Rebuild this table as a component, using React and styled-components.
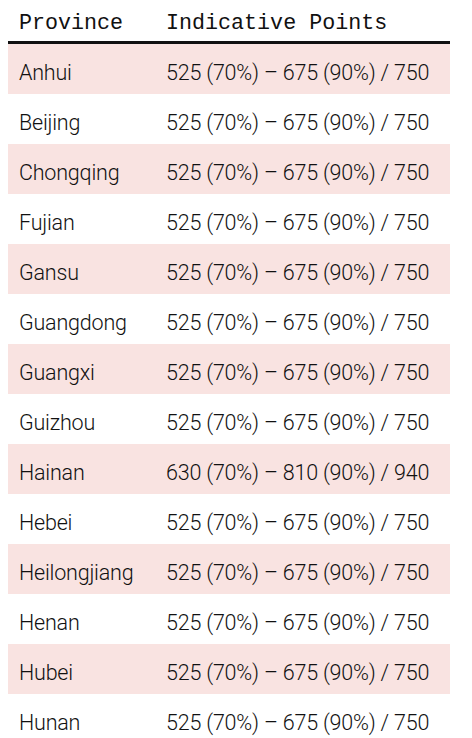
import React from "react"
import styled, { createGlobalStyle } from "styled-components"

const rows = [
  ["Anhui", "525 (70%) – 675 (90%) / 750"],
  ["Beijing", "525 (70%) – 675 (90%) / 750"],
  ["Chongqing", "525 (70%) – 675 (90%) / 750"],
  ["Fujian", "525 (70%) – 675 (90%) / 750"],
  ["Gansu", "525 (70%) – 675 (90%) / 750"],
  ["Guangdong", "525 (70%) – 675 (90%) / 750"],
  ["Guangxi", "525 (70%) – 675 (90%) / 750"],
  ["Guizhou", "525 (70%) – 675 (90%) / 750"],
  ["Hainan", "630 (70%) – 810 (90%) / 940"],
  ["Hebei", "525 (70%) – 675 (90%) / 750"],
  ["Heilongjiang", "525 (70%) – 675 (90%) / 750"],
  ["Henan", "525 (70%) – 675 (90%) / 750"],
  ["Hubei", "525 (70%) – 675 (90%) / 750"],
  ["Hunan", "525 (70%) – 675 (90%) / 750"],
]

function App() {
  return (
    <>
      <GlobalStyle />
      <Table>
        <thead>
          <tr>
            <HeadCell $width="147px">Province</HeadCell>
            <HeadCell>Indicative Points</HeadCell>
          </tr>
        </thead>
        <tbody>
          {rows.map(([province, points], i) => (
            <Row key={province} $striped={i % 2 === 0}>
              <Cell>{province}</Cell>
              <Cell>{points}</Cell>
            </Row>
          ))}
        </tbody>
      </Table>
    </>
  )
}

export default App

const GlobalStyle = createGlobalStyle`
  body {
    margin: 0;
    padding: 0 22px 0 8px;
    background: #fff;
    overflow: hidden;
  }
`

const Table = styled.table`
  width: 442px;
  border-collapse: separate;
  border-spacing: 0;
  table-layout: fixed;
  color: #1c1c1c;
`

const HeadCell = styled.th`
  box-sizing: border-box;
  width: ${props => props.$width || "auto"};
  padding: 11px 11px 4px;
  text-align: left;
  vertical-align: bottom;
  font-family: "Liberation Mono", "DejaVu Sans Mono", monospace;
  font-size: 21.7px;
  font-weight: 400;
  line-height: 26px;
  color: #111;
  border-bottom: 3px solid #111;
`

const Row = styled.tr`
  height: 50px;
  background: ${props => (props.$striped ? "#f9e3e1" : "#fff")};
`

const Cell = styled.td`
  box-sizing: border-box;
  padding: 0 11px 8px;
  vertical-align: bottom;
  font-family: Roboto, "Liberation Sans", sans-serif;
  font-size: 21.5px;
  font-weight: 300;
  line-height: 26px;
  white-space: nowrap;
  letter-spacing: -0.2px;
  color: #111;
`
